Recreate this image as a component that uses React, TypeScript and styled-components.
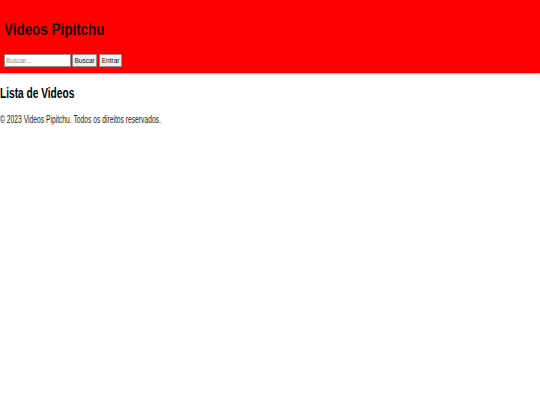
import styled, { createGlobalStyle } from "styled-components";

const GlobalStyle = createGlobalStyle`
  html, body {
    margin: 0;
    padding: 0;
    background: #ffffff;
    font-family: "Liberation Sans Narrow", "Arial Narrow", "Liberation Sans", Arial, sans-serif;
    color: #000000;
  }
`;

// the reference uses a narrow sans; squeeze Liberation Sans to its widths
const Header = styled.header`
  background-color: #ff0000;
  padding: 20px 4px 6px;
  box-shadow: 0 1px 2px rgba(0, 0, 0, 0.3);
`;

const Title = styled.h1`
  margin: 0 0 14px;
  font-size: 17px;
  line-height: 20px;
  font-weight: bold;
  color: #141414;
  transform: scaleX(0.79);
  transform-origin: left center;
`;

const SearchForm = styled.form`
  display: flex;
  align-items: center;
  gap: 2px;
`;

const SearchInput = styled.input`
  width: 67px;
  height: 13px;
  box-sizing: border-box;
  margin-right: -1px;
  padding: 0 1px;
  font-family: inherit;
  font-size: 6.5px;
  border: 1px solid #8f8f8f;
  border-radius: 1px;
  background: #ffffff;
  outline: none;
  &::placeholder {
    color: #8a8a8a;
  }
`;

const Button = styled.button`
  height: 13px;
  box-sizing: border-box;
  padding: 0 1.5px;
  font-family: inherit;
  font-size: 6.5px;
  color: #111111;
  background: #efefef;
  border: 1px solid #8f8f8f;
  border-radius: 1px;
`;

const Main = styled.main`
  padding: 0;
`;

const SectionTitle = styled.h2`
  margin: 12px 0 12px;
  font-size: 14.5px;
  line-height: 16px;
  font-weight: bold;
  transform: scaleX(0.7);
  transform-origin: left center;
`;

const Footer = styled.footer`
  font-size: 10.5px;
  line-height: 12px;
  color: #222222;
  transform: scaleX(0.64);
  transform-origin: left center;
`;

export default function App() {
  return (
    <>
      <GlobalStyle />
      <Header>
        <Title>Videos Pipitchu</Title>
        <SearchForm onSubmit={(e) => e.preventDefault()}>
          <SearchInput type="text" placeholder="Buscar..." />
          <Button type="submit">Buscar</Button>
          <Button type="button">Entrar</Button>
        </SearchForm>
      </Header>
      <Main>
        <SectionTitle>Lista de Videos</SectionTitle>
      </Main>
      <Footer>© 2023 Videos Pipitchu. Todos os direitos reservados.</Footer>
    </>
  );
}
